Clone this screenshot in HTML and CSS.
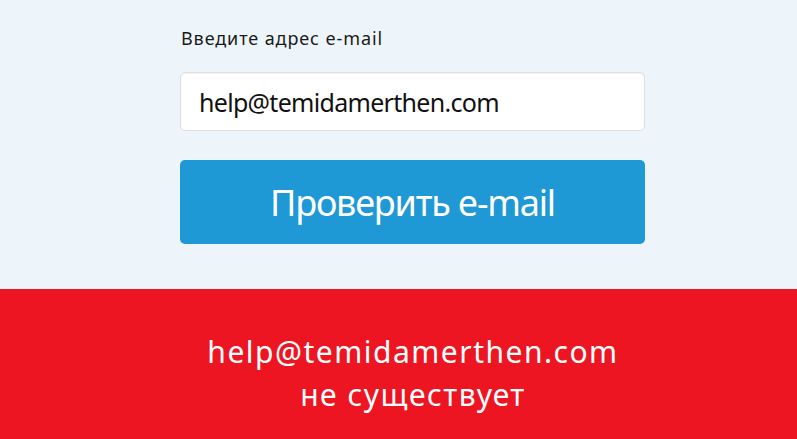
FILE: index.html
```html
<!DOCTYPE html>
<html lang="ru">
<head>
<meta charset="utf-8">
<title>Проверка e-mail</title>
<link rel="stylesheet" href="styles.css">
</head>
<body>
<section class="check">
  <form class="check-form">
    <label class="check-label" for="email">Введите адрес e-mail</label>
    <input class="check-input" id="email" type="text" value="help@temidamerthen.com">
    <button class="check-button" type="button">Проверить e-mail</button>
  </form>
</section>
<section class="result">
  <p class="result-text">help@temidamerthen.com<br>не существует</p>
</section>
</body>
</html>
```
FILE: styles.css
```css
html, body {
  margin: 0;
  padding: 0;
}
body {
  font-family: "Noto Sans", sans-serif;
  background: #edf5fb;
  overflow: hidden;
}
.check {
  height: 289px;
  box-sizing: border-box;
  padding-top: 26px;
}
.check-form {
  width: 465px;
  margin-left: 180px;
  display: flex;
  flex-direction: column;
}
.check-label {
  font-size: 18px;
  letter-spacing: 0.9px;
  color: #1a1a1a;
  line-height: 24px;
  padding-left: 1px;
}
.check-input {
  margin-top: 22px;
  height: 59px;
  box-sizing: border-box;
  border: 1px solid #dcdfe3;
  border-radius: 5px;
  background: #fff;
  padding: 0 18px;
  font-family: inherit;
  font-size: 25px;
  letter-spacing: -0.7px;
  color: #111;
  outline: none;
  box-shadow: inset 0 1px 2px rgba(0,0,0,0.06);
}
.check-button {
  margin-top: 29px;
  height: 84px;
  border: none;
  border-radius: 5px;
  background: #1f98d6;
  color: #fff;
  font-family: inherit;
  font-size: 36px;
  letter-spacing: -1.2px;
  padding: 0;
  cursor: pointer;
}
.result {
  background: #ee1522;
  height: 150px;
  box-sizing: border-box;
  display: flex;
  justify-content: center;
  padding-left: 29px;
}
.result-text {
  margin: 0;
  padding-top: 41px;
  color: #fff;
  font-size: 30px;
  letter-spacing: 1.5px;
  line-height: 43px;
  text-align: center;
}
```
